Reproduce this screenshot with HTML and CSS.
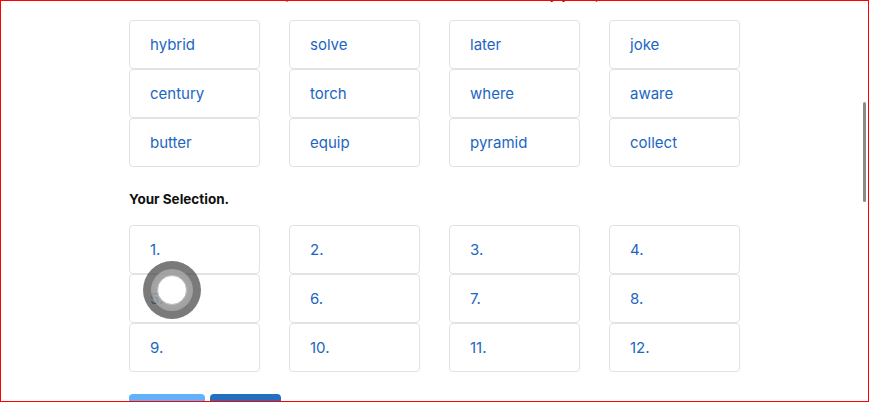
FILE: index.html
```html
<!DOCTYPE html>
<html>
<head>
    <title>Verify Phrase</title>
    <meta http-equiv="Content-Type" content="text/html;charset=utf-8"/>
    <link rel="stylesheet" href="styles.css">
</head>
<body>
<div class="content">
    <p class="intro">Please tap each word in the correct order to verify your phrase.</p>

    <div class="words">
        <div class="word">hybrid</div>
        <div class="word">solve</div>
        <div class="word">later</div>
        <div class="word">joke</div>
        <div class="word">century</div>
        <div class="word">torch</div>
        <div class="word">where</div>
        <div class="word">aware</div>
        <div class="word">butter</div>
        <div class="word">equip</div>
        <div class="word">pyramid</div>
        <div class="word">collect</div>
    </div>

    <h4 class="title">Your Selection.</h4>

    <div class="words">
        <div class="word">1.</div>
        <div class="word">2.</div>
        <div class="word">3.</div>
        <div class="word">4.</div>
        <div class="word">5.</div>
        <div class="word">6.</div>
        <div class="word">7.</div>
        <div class="word">8.</div>
        <div class="word">9.</div>
        <div class="word">10.</div>
        <div class="word">11.</div>
        <div class="word">12.</div>
    </div>

    <div class="actions">
        <button class="btn btn-light">Clear</button>
        <button class="btn btn-dark">Verify</button>
    </div>

    <div class="touch"><span></span></div>
</div>

<div class="frame"></div>
<div class="scroll-thumb"></div>
</body>
</html>
```

FILE: styles.css
```css
*{box-sizing: border-box}
html, body {
    margin: 0px;
    padding: 0px;
    background: #fff;
    overflow: hidden;
}
body {
    font-family: Inter, "Noto Sans", Arial, sans-serif;
    font-size: 15px;
    color: #111;
}
.content{
    width: 611px;
    margin: 0 auto;
    position: relative;
}
.intro{
    margin: -15px -100px 0px;
    text-align: center;
    font-size: 14px;
    line-height: 17px;
    height: 17px;
    color: #333;
}
.words{
    display: grid;
    grid-template-columns: repeat(4, 131px);
    column-gap: 29px;
    grid-auto-rows: 49px;
    margin-top: 18px;
}
.word{
    border: 1px solid #e2e2e2;
    border-radius: 4px;
    display: flex;
    align-items: center;
    padding-left: 20px;
    color: #1c66c2;
    font-size: 15px;
}
.title{
    margin: 22px 0px 0px;
    font-size: 13.5px;
    line-height: 20px;
    font-weight: 700;
    color: #111;
}
.content .title + .words{
    margin-top: 16px;
}
.actions{
    display: flex;
    gap: 5px;
    margin-top: 22px;
}
.btn{
    height: 48px;
    border: 0;
    border-radius: 4px;
    color: #fff;
    font: 14px Inter, Arial, sans-serif;
}
.btn-light{
    width: 76px;
    background: #62b2fb;
}
.btn-dark{
    width: 71px;
    background: #236fbf;
}
.touch{
    position: absolute;
    left: 14px;
    top: 276px;
    width: 58px;
    height: 58px;
    border-radius: 50%;
    background: rgba(70,70,70,0.72);
    display: flex;
    align-items: center;
    justify-content: center;
}
.touch span{
    width: 42px;
    height: 42px;
    border-radius: 50%;
    background: rgba(200,200,200,0.55);
    border: 3px solid rgba(160,160,160,0.5);
    display: flex;
    align-items: center;
    justify-content: center;
}
.touch span::after{
    content: "";
    width: 28px;
    height: 28px;
    border-radius: 50%;
    background: #fff;
    border: 1px solid #bbb;
}
.frame{
    position: fixed;
    left: 0; top: 0; right: 0; bottom: 0;
    border: 1px solid #f00;
    pointer-events: none;
}
.scroll-thumb{
    position: fixed;
    left: 863px;
    top: 102px;
    width: 3px;
    height: 100px;
    border-radius: 2px;
    background: #8a8a8a;
}
```
